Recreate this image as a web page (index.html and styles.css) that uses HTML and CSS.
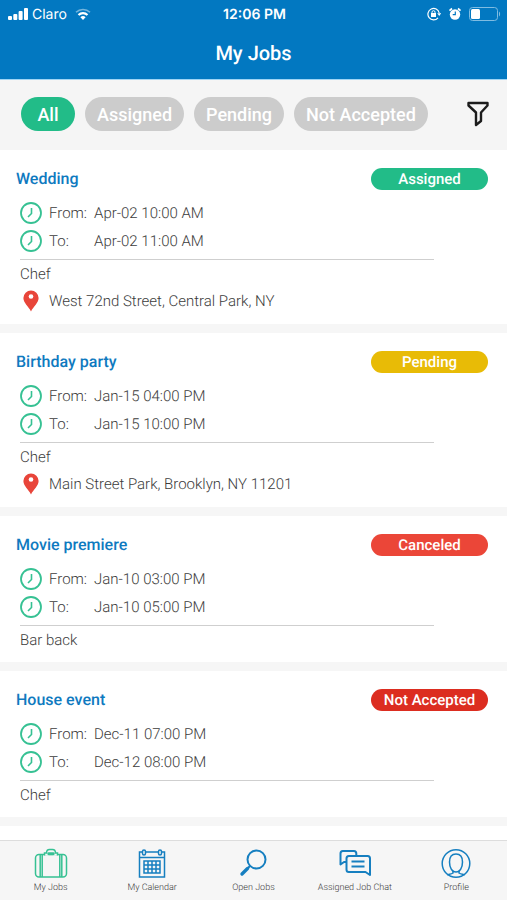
FILE: index.html
```html
<!DOCTYPE html>
<html lang="en">
<head>
    <meta charset="UTF-8">
    <meta name="viewport" content="width=device-width, initial-scale=1.0">
    <title>My Jobs</title>
    <link rel="stylesheet" href="styles.css">
</head>
<body>
<!-- Shared icons -->
<svg class="sprite" aria-hidden="true">
    <symbol id="clock" viewBox="0 0 22 22">
        <circle cx="11" cy="11" r="10" fill="none" stroke="#36c193" stroke-width="1.8"/>
        <path d="M11.500 6v5.500L8 15" fill="none" stroke="#36c193" stroke-width="1.600"/>
    </symbol>
    <symbol id="pin" viewBox="0 0 22 22">
        <path d="M11 .5a7.600 7.600 0 0 0-7.600 7.600C3.400 13 8.500 16.500 11 21.500c2.500-5 7.600-8.500 7.600-13.400A7.600 7.600 0 0 0 11 .5z" fill="#e8453a"/>
        <circle cx="11" cy="6.500" r="2.300" fill="#fff"/>
    </symbol>
</svg>
<div class="app">
    <header class="header">
        <div class="status-bar">
            <div class="carrier">
                <svg width="20" height="12" viewBox="0 0 20 12" fill="#fff" aria-hidden="true">
                    <rect x="0" y="8" width="4" height="4" rx="1"/>
                    <rect x="5.300" y="6" width="4" height="6" rx="1"/>
                    <rect x="10.600" y="3" width="4" height="9" rx="1"/>
                    <rect x="16" y="0" width="4" height="12" rx="1"/>
                </svg>
                <span>Claro</span>
                <svg class="wifi" width="16" height="12" viewBox="0 0 16 12" fill="none" stroke="#fff" aria-hidden="true">
                    <path d="M1 4.300a10 10 0 0 1 14 0" stroke-width="1.600" opacity=".45"/>
                    <path d="M3.500 7a6.500 6.500 0 0 1 9 0" stroke-width="2.200"/>
                    <path d="M8 12 5.400 9.300a3.800 3.800 0 0 1 5.200 0z" fill="#fff" stroke="none"/>
                </svg>
            </div>
            <div class="time">12:06 PM</div>
            <div class="device">
                <svg width="14" height="14" viewBox="0 0 14 14" fill="none" stroke="#fff" aria-hidden="true">
                    <path d="M11 10.800A5.700 5.700 0 1 1 12.200 6" stroke-width="1.200"/>
                    <path d="M10.200 6.300h4l-2 2.700z" fill="#fff" stroke="none"/>
                    <rect x="4" y="6" width="5" height="4" fill="#fff" stroke="none"/>
                    <path d="M5 6.500V5.200a1.500 1.500 0 0 1 3 0v1.300"/>
                </svg>
                <svg width="14" height="14" viewBox="0 0 14 14" aria-hidden="true">
                    <circle cx="7" cy="7.500" r="5.200" fill="#fff"/>
                    <path d="M1.500 3.700 4 1.500M10 1.500l2.500 2.200" stroke="#fff" stroke-width="1.700"/>
                    <path d="M7.300 4.500v3.200H4.700" fill="none" stroke="#0278c1" stroke-width="1.200"/>
                </svg>
                <svg width="32" height="14" viewBox="0 0 32 14" aria-hidden="true">
                    <rect x=".5" y=".5" width="28" height="13" rx="3" fill="none" stroke="#7fbce2"/>
                    <rect x="2" y="2" width="9" height="10" rx="1.500" fill="#fff"/>
                    <path d="M30 4.500c1.500.8 1.500 4.200 0 5z" fill="#7fbce2"/>
                </svg>
            </div>
        </div>
        <h1>My Jobs</h1>
    </header>

    <div class="filters">
        <button class="filter active">All</button>
        <button class="filter">Assigned</button>
        <button class="filter">Pending</button>
        <button class="filter">Not Accepted</button>
        <button class="filter-menu" aria-label="Filter">
            <svg width="24" height="26" viewBox="0 0 24 26" fill="none" stroke="#1c1c1c" stroke-width="2.400" stroke-linejoin="round" aria-hidden="true">
                <path d="M2.500 2h19v2.500L15 11.500v8.500l-5 4V11.500L2.500 4.500z"/>
            </svg>
        </button>
    </div>

    <main class="jobs">
        <article class="job">
            <div class="job-head">
                <h2>Wedding</h2>
                <span class="badge assigned">Assigned</span>
            </div>
            <div class="job-body">
                <div class="row"><svg class="icon"><use href="#clock"/></svg><span class="label">From:</span><span>Apr-02 10:00 AM</span></div>
                <div class="row"><svg class="icon"><use href="#clock"/></svg><span class="label">To:</span><span>Apr-02 11:00 AM</span></div>
                <hr>
                <div class="row">Chef</div>
                <div class="row place"><svg class="icon"><use href="#pin"/></svg><span>West 72nd Street, Central Park, NY</span></div>
            </div>
        </article>
        <article class="job">
            <div class="job-head">
                <h2>Birthday party</h2>
                <span class="badge pending">Pending</span>
            </div>
            <div class="job-body">
                <div class="row"><svg class="icon"><use href="#clock"/></svg><span class="label">From:</span><span>Jan-15 04:00 PM</span></div>
                <div class="row"><svg class="icon"><use href="#clock"/></svg><span class="label">To:</span><span>Jan-15 10:00 PM</span></div>
                <hr>
                <div class="row">Chef</div>
                <div class="row place"><svg class="icon"><use href="#pin"/></svg><span>Main Street Park, Brooklyn, NY 11201</span></div>
            </div>
        </article>
        <article class="job">
            <div class="job-head">
                <h2>Movie premiere</h2>
                <span class="badge canceled">Canceled</span>
            </div>
            <div class="job-body">
                <div class="row"><svg class="icon"><use href="#clock"/></svg><span class="label">From:</span><span>Jan-10 03:00 PM</span></div>
                <div class="row"><svg class="icon"><use href="#clock"/></svg><span class="label">To:</span><span>Jan-10 05:00 PM</span></div>
                <hr>
                <div class="row">Bar back</div>
            </div>
        </article>
        <article class="job">
            <div class="job-head">
                <h2>House event</h2>
                <span class="badge not-accepted">Not Accepted</span>
            </div>
            <div class="job-body">
                <div class="row"><svg class="icon"><use href="#clock"/></svg><span class="label">From:</span><span>Dec-11 07:00 PM</span></div>
                <div class="row"><svg class="icon"><use href="#clock"/></svg><span class="label">To:</span><span>Dec-12 08:00 PM</span></div>
                <hr>
                <div class="row">Chef</div>
            </div>
        </article>
        <article class="job"></article>
    </main>

    <nav class="tabs">
        <a href="#jobs" class="tab current">
            <svg viewBox="0 0 34 32" stroke-width="1.500" aria-hidden="true">
                <rect x="1.500" y="6.500" width="31" height="22.500" rx="3.500"/>
                <path d="M6.200 6.500v22.500M8.200 6.500v22.500M25.800 6.500v22.500M27.800 6.500v22.500"/>
                <path d="M10.500 7.500V5h2C12.500 3 13.500 1.500 15.500 1.500h3c2 0 3 1.500 3 3.500h2v2.500" fill="#f6f6f6"/>
                <rect x="14" y="5" width="6" height="1.500" rx=".7"/>
            </svg>
            <span>My Jobs</span>
        </a>
        <a href="#calendar" class="tab">
            <svg viewBox="0 0 34 32" stroke-width="1.500" aria-hidden="true">
                <path d="M7 4H4.500v25h25V4H27M11 4h12M4.500 9.500h25"/>
                <rect x="7.500" y="2" width="3" height="5" rx="1.500"/>
                <rect x="23.500" y="2" width="3" height="5" rx="1.500"/>
                <path d="M9 13h16v12H9zM9 17h16M9 21h16M13 13v12M17 13v12M21 13v12"/>
            </svg>
            <span>My Calendar</span>
        </a>
        <a href="#open" class="tab">
            <svg viewBox="0 0 34 32" aria-hidden="true">
                <circle cx="20.500" cy="11.500" r="9" stroke-width="2"/>
                <path d="M14.200 17.800l-2.500 2.500" stroke-width="2"/>
                <path d="M11.500 20.500 6 26" stroke-width="3.400" stroke-linecap="round"/>
            </svg>
            <span>Open Jobs</span>
        </a>
        <a href="#chat" class="tab">
            <svg viewBox="0 0 34 32" stroke-width="2" stroke-linejoin="round" aria-hidden="true">
                <path d="M8 14H6l-3.500 2.500V5.500c0-1.500.8-2.500 2.300-2.500H16c1.500 0 2.300 1 2.300 2.500V8"/>
                <path d="M10.800 8H29.700c1.500 0 2.300 1 2.300 2.500V27l-4.500-3H10.800c-1.500 0-2.300-1-2.300-2.500v-11c0-1.500.8-2.500 2.300-2.500z"/>
                <path d="M13.500 13.500h13M13.500 18.500h13"/>
            </svg>
            <span>Assigned Job Chat</span>
        </a>
        <a href="#profile" class="tab">
            <svg viewBox="0 0 34 32" stroke-width="1.500" aria-hidden="true">
                <circle cx="17" cy="15.500" r="13.800"/>
                <path d="M17 6c-4 0-6.500 3-6.500 8 0 5.500 2.500 10 6.500 10s6.500-4.500 6.500-10c0-5-2.500-8-6.500-8z"/>
                <path d="M14 22.500v2.500c-2 1.500-4.500 1-6 2M20 22.500v2.500c2 1.500 4.500 1 6 2"/>
            </svg>
            <span>Profile</span>
        </a>
    </nav>
</div>
</body>
</html>
```

FILE: styles.css
```css
* {
    box-sizing: border-box;
}
body {
    margin: 0;
    font-family: Roboto, sans-serif;
    color: #3c3c3c;
    background-color: #f6f6f6;
    text-rendering: geometricPrecision;
}
h1, h2 {
    margin: 0;
    font-weight: 500;
}
button {
    border: none;
    font-family: inherit;
    cursor: pointer;
}
svg {
    flex: none;
}
.sprite {
    display: none;
}
.app {
    display: flex;
    flex-direction: column;
    height: 100vh;
}

/* Header */
.header {
    background-color: #0278c1;
    color: white;
    text-align: center;
    border-bottom: 1px solid #9fd5f5;
}
.header h1 {
    font-size: 20px;
    line-height: 51px;
}
.status-bar {
    display: grid;
    grid-template-columns: 1fr auto 1fr;
    align-items: center;
    height: 28px;
    padding: 0 6px 0 8px;
    font-family: Inter, sans-serif;
    font-size: 14px;
}
.carrier, .device {
    display: flex;
    align-items: center;
    gap: 4px;
}
.device {
    justify-content: flex-end;
    gap: 7px;
}
.wifi {
    margin-left: 4px;
}
.time {
    font-weight: 600;
}

/* Filters */
.filters {
    display: flex;
    align-items: center;
    gap: 10px;
    height: 70px;
    padding: 0 17px 2px 21px;
    background-color: #f5f5f5;
}
.filter {
    min-width: 54px;
    height: 34px;
    padding: 0 12px;
    border-radius: 17px;
    background-color: #cccccc;
    color: white;
    font-size: 18px;
    font-weight: 500;
    white-space: nowrap;
}
.filter.active {
    background-color: #22bc88;
}
.filter-menu {
    display: flex;
    margin-left: auto;
    padding: 0;
    background: none;
}

/* Job list */
.jobs {
    flex: 1;
    min-height: 0;
    overflow-y: auto;
    scrollbar-width: none;
}
.job {
    padding: 18px 19px 8px 16px;
    margin-bottom: 9px;
    background-color: white;
}
.job-head {
    display: flex;
    align-items: center;
    justify-content: space-between;
    margin-bottom: 9px;
}
.job-head h2 {
    color: #0f7abf;
    font-size: 16px;
    line-height: 22px;
}
.badge {
    width: 117px;
    border-radius: 11px;
    color: white;
    font-size: 15px;
    font-weight: 500;
    line-height: 22px;
    text-align: center;
}
.assigned {
    background-color: #22bc88;
}
.pending {
    background-color: #e8bb06;
}
.canceled {
    background-color: #eb4638;
}
.not-accepted {
    background-color: #dc2d20;
}
.job-body {
    padding-left: 4px;
    font-size: 15px;
    font-weight: 300;
}
.row {
    display: flex;
    align-items: center;
    height: 28px;
}
.place {
    height: 26px;
    margin-bottom: 2px;
}
.icon {
    width: 22px;
    height: 22px;
    margin-right: 7px;
}
.label {
    width: 45px;
}
.job-body hr {
    margin: 4px 54px 0 0;
    border: none;
    border-top: 1px solid #cfcfcf;
}

/* Bottom tabs */
.tabs {
    display: grid;
    grid-template-columns: repeat(5, 1fr);
    height: 60px;
    border-top: 1px solid #dddddd;
    background-color: #f6f6f6;
}
.tab {
    display: flex;
    flex-direction: column;
    align-items: center;
    gap: 2px;
    padding-top: 7px;
    color: #3c3c3c;
    font-size: 9px;
    font-weight: 300;
    line-height: 12px;
    text-decoration: none;
}
.tab svg {
    width: 34px;
    height: 32px;
    fill: none;
    stroke: #167fc0;
}
.tab.current svg {
    stroke: #36c193;
}
```
